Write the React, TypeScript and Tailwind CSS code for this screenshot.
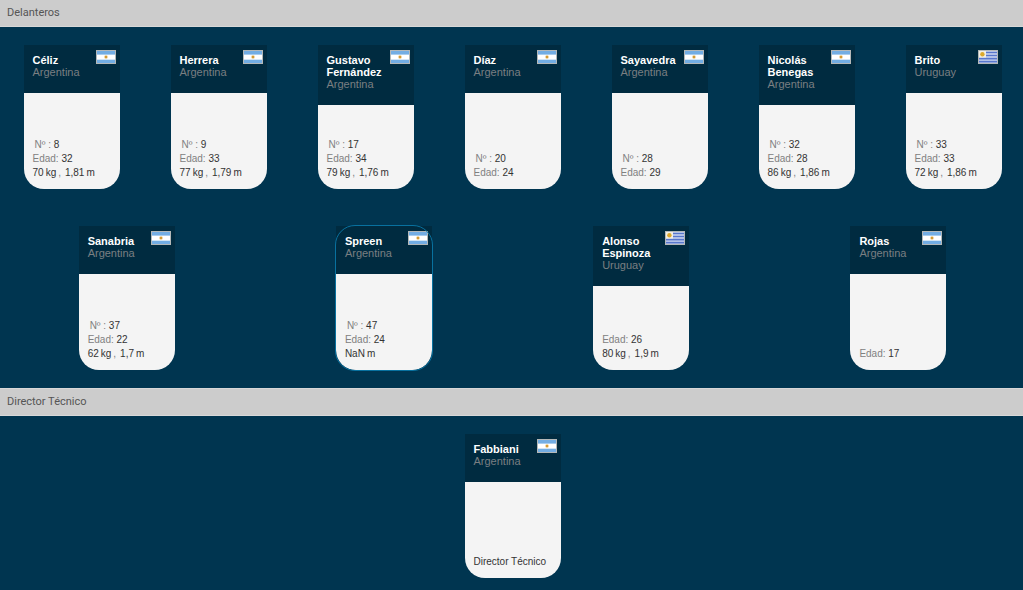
type Country = 'Argentina' | 'Uruguay';

type Member = {
  name: string;
  country: Country;
  number?: number;
  age?: number;
  build?: { weight?: string; height: string };
  role?: string;
  active?: boolean;
};

const forwards: Member[] = [
  { name: 'Céliz', country: 'Argentina', number: 8, age: 32, build: { weight: '70', height: '1,81' } },
  { name: 'Herrera', country: 'Argentina', number: 9, age: 33, build: { weight: '77', height: '1,79' } },
  { name: 'Gustavo Fernández', country: 'Argentina', number: 17, age: 34, build: { weight: '79', height: '1,76' } },
  { name: 'Díaz', country: 'Argentina', number: 20, age: 24 },
  { name: 'Sayavedra', country: 'Argentina', number: 28, age: 29 },
  { name: 'Nicolás Benegas', country: 'Argentina', number: 32, age: 28, build: { weight: '86', height: '1,86' } },
  { name: 'Brito', country: 'Uruguay', number: 33, age: 33, build: { weight: '72', height: '1,86' } },
  { name: 'Sanabria', country: 'Argentina', number: 37, age: 22, build: { weight: '62', height: '1,7' } },
  { name: 'Spreen', country: 'Argentina', number: 47, age: 24, build: { height: 'NaN' }, active: true },
  { name: 'Alonso Espinoza', country: 'Uruguay', age: 26, build: { weight: '80', height: '1,9' } },
  { name: 'Rojas', country: 'Argentina', age: 17 },
];

const staff: Member[] = [{ name: 'Fabbiani', country: 'Argentina', role: 'Director Técnico' }];

function Flag({ country }: { country: Country }) {
  return (
    <svg
      viewBox="0 0 20 14"
      role="img"
      aria-label={country}
      className="absolute top-[5px] right-1 h-3.5 w-5"
    >
      <rect width="20" height="14" fill="#b4b8b8" />
      {country === 'Argentina' ? (
        <>
          <rect x="1" y="1" width="18" height="12" fill="#73ade3" />
          <rect x="1" y="4" width="18" height="1" fill="#a9cdee" />
          <rect x="1" y="5" width="18" height="4" fill="#fff" />
          <rect x="1" y="9" width="18" height="1" fill="#d3e5f5" />
          <circle cx="10" cy="7" r="1.9" fill="#f3dfb3" />
          <circle cx="10" cy="7" r="1.3" fill="#d39a35" />
        </>
      ) : (
        <>
          <rect x="1" y="1" width="18" height="12" fill="#cfd8f0" />
          <path d="M8 2.5h11M8 5.5h11M1 8.7h18M1 11.7h18" stroke="#5877cc" strokeWidth="1.7" />
          <rect x="1" y="1" width="7" height="6.5" fill="#f2efe4" />
          <circle cx="4.4" cy="4.2" r="2.2" fill="#dca92c" />
        </>
      )}
    </svg>
  );
}

function MemberCard({ member }: { member: Member }) {
  const { name, country, number, age, build, role, active } = member;

  return (
    <article className="relative mx-6 flex h-36 w-24 flex-col">
      <header className="relative bg-[#002b40] px-[9px] pt-[9px] pb-[15px] text-[11px] leading-3">
        <h3 className="w-15 font-bold text-white">{name}</h3>
        <p className="text-[#7a7f82]">{country}</p>
        <Flag country={country} />
      </header>

      <div className="flex flex-1 flex-col justify-end rounded-b-[20px] bg-[#f4f4f4] px-[9px] pb-[9px] text-[10px] leading-[14px] whitespace-nowrap text-[#333]">
        {number !== undefined && (
          <p className="pl-0.5">
            <span className="text-[#808080]">Nº : </span>
            {number}
          </p>
        )}
        {age !== undefined && (
          <p>
            <span className="text-[#808080]">Edad: </span>
            {age}
          </p>
        )}
        {build && (
          <p className="flex gap-0.5">
            {build.weight && (
              <>
                <span>{build.weight}</span>
                <span>kg</span>
                <span className="mr-0.5 text-[#808080]">,</span>
              </>
            )}
            <span>{build.height}</span>
            <span>m</span>
          </p>
        )}
        {role && <p>{role}</p>}
      </div>

      {active && (
        <div className="pointer-events-none absolute -inset-px rounded-[20px] border border-[#08719f]" />
      )}
    </article>
  );
}

function Squad({ title, members }: { title: string; members: Member[] }) {
  return (
    <section>
      <h2 className="h-7 border-y border-[#d8d8d8] bg-[#ccc] px-[7px] font-[Roboto,sans-serif] text-[11px] leading-[26px] text-[#555]">
        {title}
      </h2>
      <div className="-mr-1 -ml-0.5 flex flex-wrap justify-around gap-y-[37px] py-[18px]">
        {members.map((m) => (
          <MemberCard key={m.name} member={m} />
        ))}
      </div>
    </section>
  );
}

export default function App() {
  return (
    <main className="-mt-px min-h-screen overflow-hidden bg-[#003550] font-['Liberation_Sans',Arial,sans-serif]">
      <Squad title="Delanteros" members={forwards} />
      <Squad title="Director Técnico" members={staff} />
    </main>
  );
}
